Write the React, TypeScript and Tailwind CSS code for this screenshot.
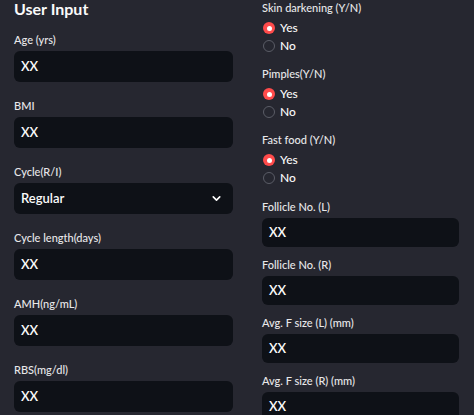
import { ChevronDown } from 'lucide-react';

const LEFT_FIELDS = [
  { label: 'Age (yrs)', value: 'XX' },
  { label: 'BMI', value: 'XX' },
  { label: 'Cycle(R/I)', value: 'Regular', select: true },
  { label: 'Cycle length(days)', value: 'XX' },
  { label: 'AMH(ng/mL)', value: 'XX' },
  { label: 'RBS(mg/dl)', value: 'XX' },
];

const RADIO_GROUPS = ['Skin darkening (Y/N)', 'Pimples(Y/N)', 'Fast food (Y/N)'];

const RIGHT_FIELDS = ['Follicle No. (L)', 'Follicle No. (R)', 'Avg. F size (L) (mm)', 'Avg. F size (R) (mm)'];

function Radio({ label, checked }: { label: string; checked: boolean }) {
  return (
    <div className="flex items-center h-[18px] gap-[5px] pl-[1px]">
      {checked ? (
        <span className="w-[12px] h-[12px] rounded-full bg-[#ff4b4b] flex items-center justify-center">
          <span className="w-[5px] h-[5px] rounded-full bg-white" />
        </span>
      ) : (
        <span className="w-[12px] h-[12px] rounded-full border border-[#5a5c66]" />
      )}
      <span className="text-[12px] text-[#fafafa] font-medium">{label}</span>
    </div>
  );
}

export default function App() {
  return (
    <div
      className="w-[474px] h-[415px] overflow-hidden bg-[#262730] text-[#fafafa] flex"
      style={{ fontFamily: 'Lato, "Noto Sans", sans-serif' }}
    >
      {/* Left column */}
      <div className="w-[219px] ml-[14px] flex flex-col">
        <h2 className="text-[16px] font-bold leading-[18px] h-[33px]">User Input</h2>
        <div className="flex flex-col gap-[17px]">
          {LEFT_FIELDS.map((f) => (
            <div key={f.label} className="flex flex-col">
              <div className="text-[11px] leading-[14px] h-[14px] mb-[4px] font-medium text-[#e8e8ea]">{f.label}</div>
              <div className="h-[31px] rounded-[6px] bg-[#0e1117] flex items-center justify-between pl-[7px] pr-[10px]">
                <span className="text-[13px] font-semibold">{f.value}</span>
                {f.select && <ChevronDown size={13} strokeWidth={3} className="text-white" />}
              </div>
            </div>
          ))}
        </div>
      </div>

      {/* Right column */}
      <div className="w-[197px] ml-[29px] flex flex-col pt-[1px]">
        {RADIO_GROUPS.map((g) => (
          <div key={g} className="flex flex-col mb-[12px]">
            <div className="text-[11px] leading-[14px] h-[14px] mb-[4px] font-medium text-[#e8e8ea]">{g}</div>
            <Radio label="Yes" checked />
            <Radio label="No" checked={false} />
          </div>
        ))}
        <div className="flex flex-col gap-[11px] mt-[1px]">
          {RIGHT_FIELDS.map((l) => (
            <div key={l} className="flex flex-col">
              <div className="text-[11px] leading-[14px] h-[14px] mb-[4px] font-medium text-[#e8e8ea]">{l}</div>
              <div className="h-[29px] rounded-[6px] bg-[#0e1117] flex items-center pl-[7px]">
                <span className="text-[13px] font-semibold">XX</span>
              </div>
            </div>
          ))}
        </div>
      </div>
    </div>
  );
}
